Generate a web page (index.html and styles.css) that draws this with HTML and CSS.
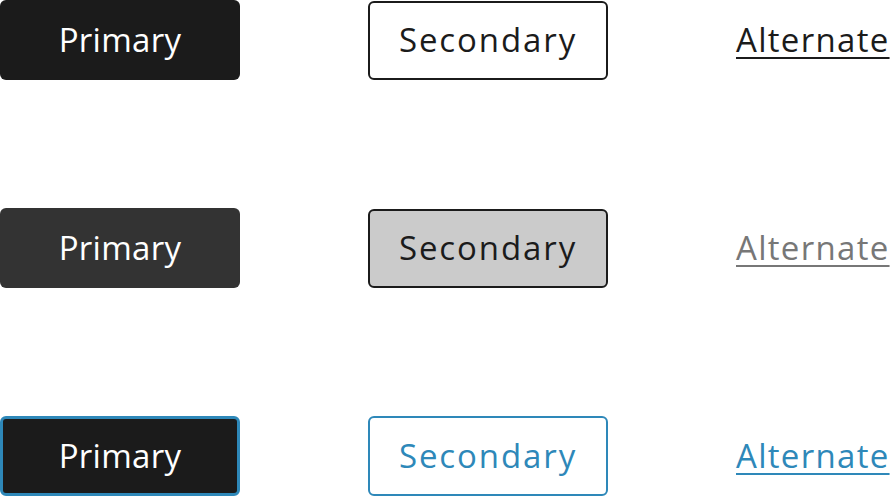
FILE: index.html
```html
<!DOCTYPE html>
<html>
<head>
<meta charset="utf-8">
<link rel="stylesheet" href="styles.css">
</head>
<body>
<div class="grid">
  <div class="row">
    <button class="btn primary">Primary</button>
    <button class="btn secondary">Secondary</button>
    <a class="alt" href="#">Alternate</a>
  </div>
  <div class="row hover">
    <button class="btn primary">Primary</button>
    <button class="btn secondary">Secondary</button>
    <a class="alt" href="#">Alternate</a>
  </div>
  <div class="row focus">
    <button class="btn primary">Primary</button>
    <button class="btn secondary">Secondary</button>
    <a class="alt" href="#">Alternate</a>
  </div>
</div>
</body>
</html>
```
FILE: styles.css
```css
html, body { margin: 0; padding: 0; background: #fff; }
body { font-family: "Open Sans", "DejaVu Sans", sans-serif; overflow: hidden; }
.grid { display: flex; flex-direction: column; gap: 128px; }
.row { display: grid; grid-template-columns: 240px 240px 240px; column-gap: 128px; height: 80px; align-items: center; }
.btn {
  box-sizing: border-box;
  width: 240px; height: 80px;
  border-radius: 6px;
  font-family: inherit;
  font-size: 33px;
  font-weight: 530;
  line-height: 1;
  letter-spacing: 0.3px;
  padding: 0 0 2px;
  margin: 0;
  cursor: pointer;
}
.primary { background: #1b1b1b; color: #fff; border: none; }
.secondary { background: #fff; color: #1b1b1b; border: 2px solid #1b1b1b; height: 79px; letter-spacing: 1.9px; }
.alt { font-size: 33px; font-weight: 530; line-height: 1; color: #1b1b1b; text-decoration: underline; text-decoration-thickness: 2px; text-underline-offset: 5px; letter-spacing: 1.3px; justify-self: start; margin-bottom: 2px; }
.hover .primary { background: #333333; }
.hover .secondary { background: #cbcbcb; }
.hover .alt { color: #777777; }
.focus .primary { border: 3px solid #2e88b9; }
.focus .secondary { color: #2e88b9; border-color: #2e88b9; height: 80px; }
.focus .alt { color: #2e88b9; }
```
